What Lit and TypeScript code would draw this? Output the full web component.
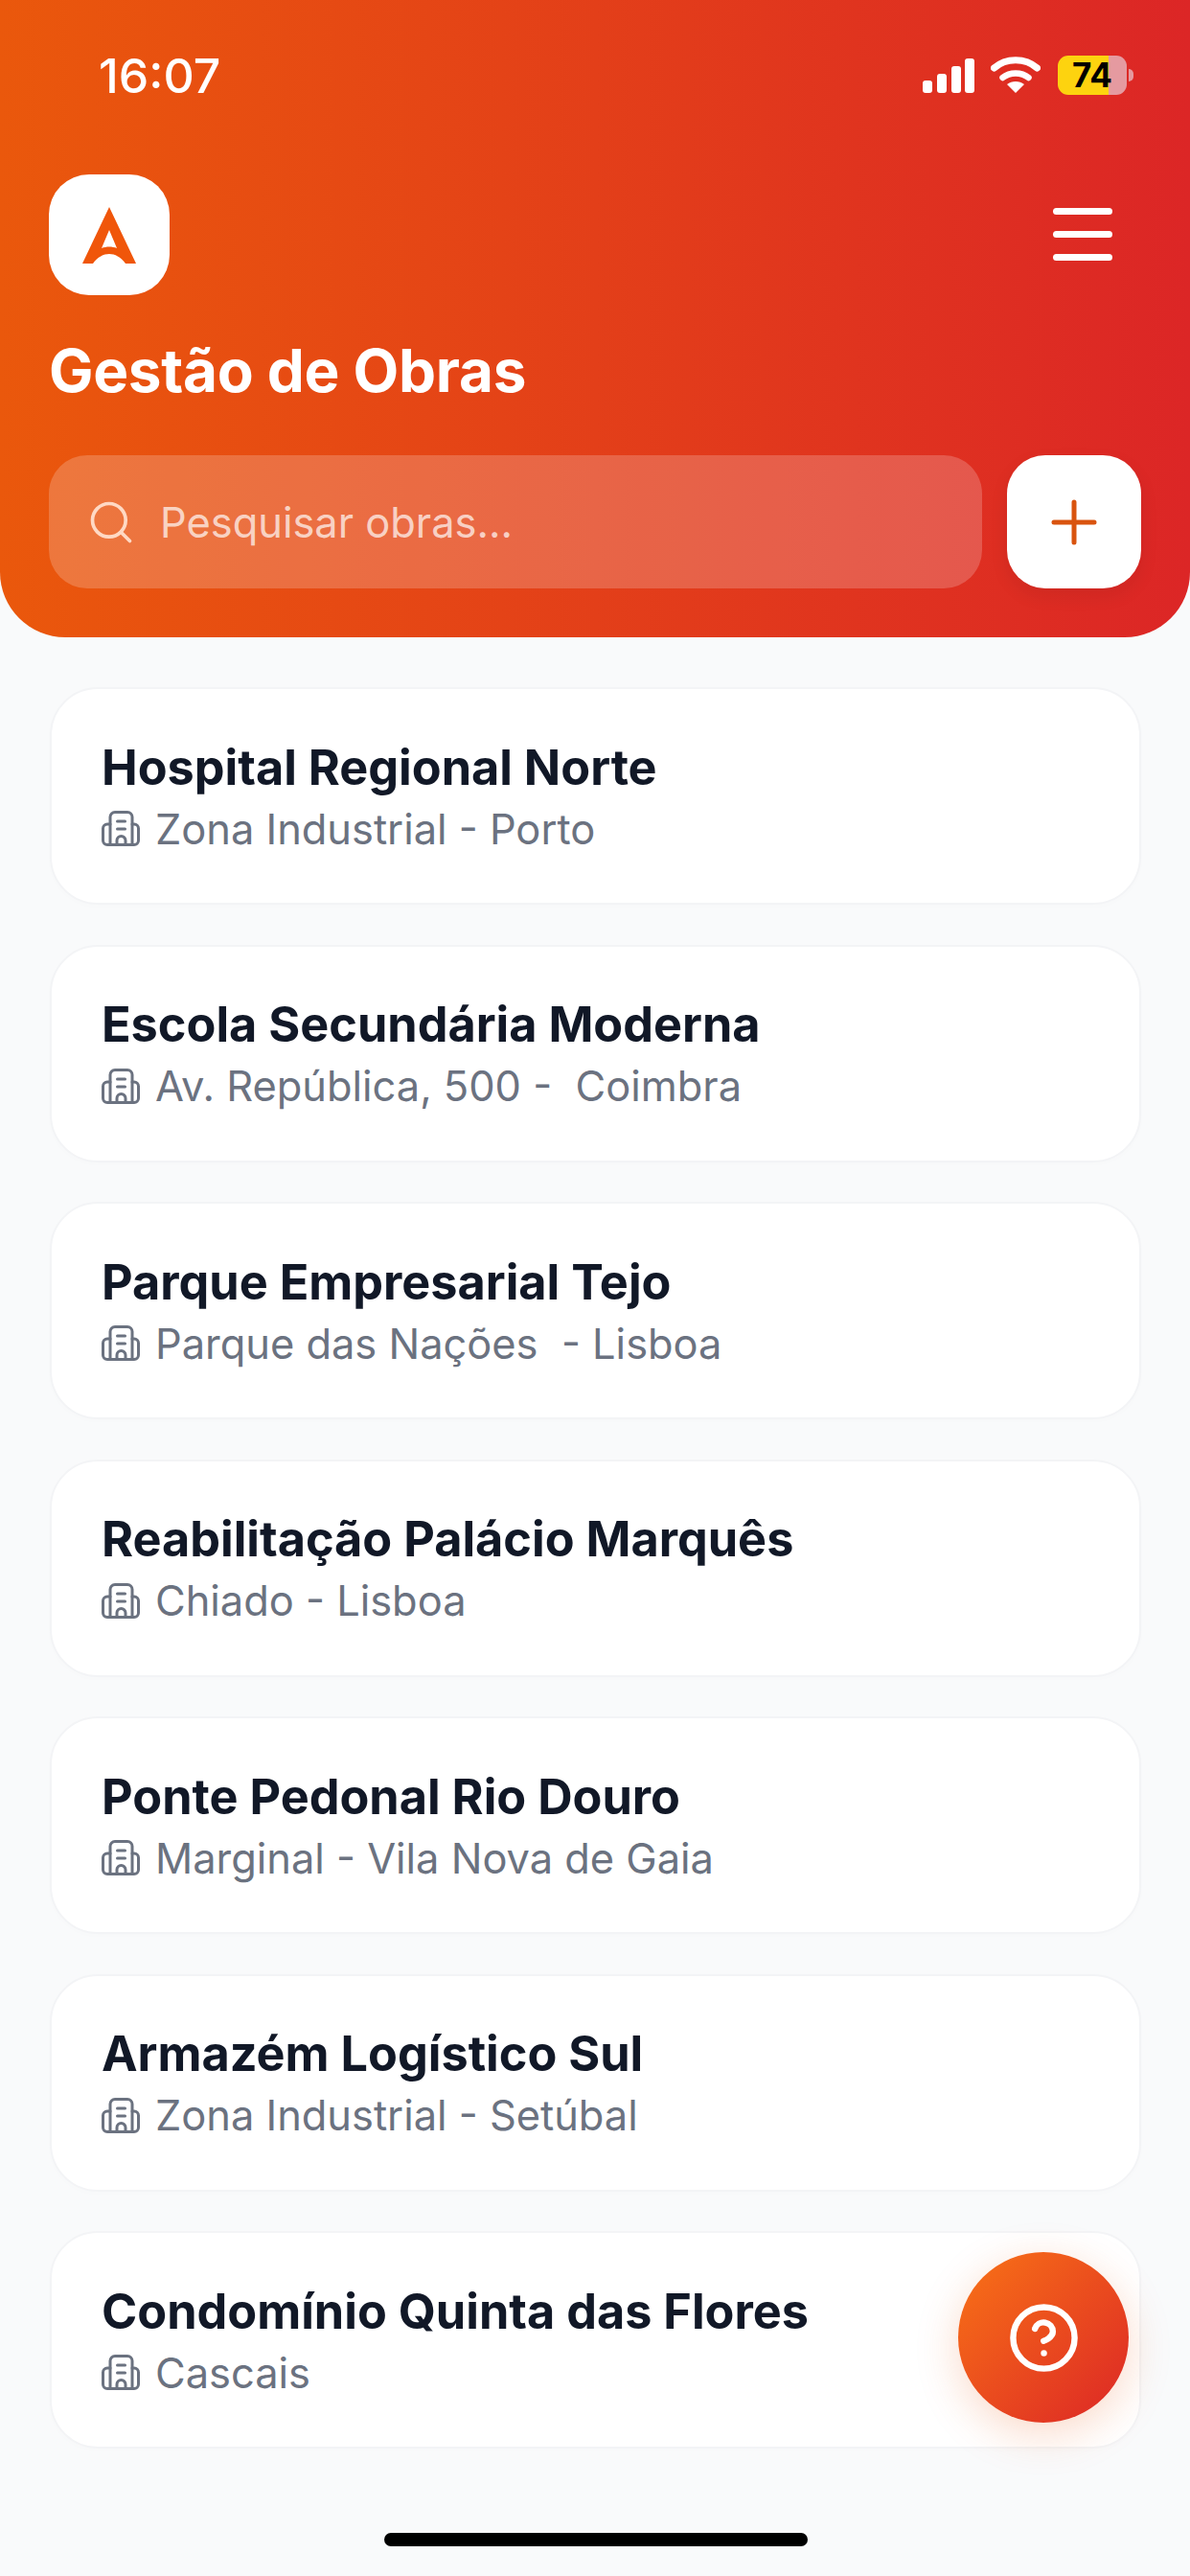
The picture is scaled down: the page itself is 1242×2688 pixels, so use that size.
import { LitElement, html, css, svg } from "lit";
import { customElement } from "lit/decorators.js";

const OBRAS = [
  ["Hospital Regional Norte", "Zona Industrial - Porto"],
  ["Escola Secundária Moderna", "Av. República, 500 -  Coimbra"],
  ["Parque Empresarial Tejo", "Parque das Nações  - Lisboa"],
  ["Reabilitação Palácio Marquês", "Chiado - Lisboa"],
  ["Ponte Pedonal Rio Douro", "Marginal - Vila Nova de Gaia"],
  ["Armazém Logístico Sul", "Zona Industrial - Setúbal"],
  ["Condomínio Quinta das Flores", "Cascais"],
];

const buildingIcon = html`<svg class="building" viewBox="0 0 40 37" fill="none" stroke="currentColor" stroke-width="3" stroke-linecap="round" stroke-linejoin="round">
  ${svg`<path d="M9 35.500V6.500a5 5 0 0 1 5-5h13a5 5 0 0 1 5 5v29"/>
  <path d="M9 14H6a4.500 4.500 0 0 0-4.500 4.500V31A4.500 4.500 0 0 0 6 35.500h28a4.500 4.500 0 0 0 4.500-4.500V18.500A4.500 4.500 0 0 0 34 14h-2"/>
  <path d="M16.500 11h8M16.500 19h8"/>
  <path d="M16 35.500V31a4.500 4.500 0 0 1 9 0v4.500"/>`}
</svg>`;

@customElement("app-root")
export class AppRoot extends LitElement {
  static styles = css`
    :host {
      display: block;
      font-family: Inter, "Liberation Sans", sans-serif;
    }
    .page {
      position: relative;
      width: 1242px;
      height: 2688px;
      overflow: hidden;
      background: #f9fafb;
      display: flex;
      flex-direction: column;
    }
    .header {
      height: 665px;
      box-sizing: border-box;
      flex: none;
      background: linear-gradient(90deg, #ea580c, #dc2626);
      border-radius: 0 0 68px 68px;
      display: flex;
      flex-direction: column;
      color: #fff;
    }
    .status {
      height: 158px;
      flex: none;
      box-sizing: border-box;
      padding: 55px 66px 0 103px;
      display: flex;
      justify-content: space-between;
      align-items: flex-start;
    }
    .time {
      font-size: 50px;
      line-height: 48px;
      font-weight: 500;
    }
    .sys {
      display: flex;
      align-items: flex-start;
      padding-top: 3px;
    }
    .signal { width: 54px; height: 37px; margin-top: 2px; }
    .wifi { width: 52px; height: 39px; margin-left: 17px; }
    .battery {
      margin-left: 18px;
      width: 72px;
      height: 41px;
      border-radius: 11px;
      background: linear-gradient(90deg, #fdd30f 0 73.500%, #e59aa0 73.500%);
      color: #000;
      font-size: 35px;
      font-weight: 700;
      line-height: 41px;
      text-align: center;
      position: relative;
    }
    .knob {
      position: absolute;
      left: 74px;
      top: 14px;
      width: 5px;
      height: 13px;
      border-radius: 0 6px 6px 0;
      background: #e59aa0;
    }
    .brand {
      flex: none;
      height: 126px;
      margin-top: 24px;
      padding: 0 81px 0 51px;
      display: flex;
      justify-content: space-between;
      align-items: center;
    }
    .logo {
      width: 126px;
      height: 126px;
      border-radius: 42px;
      background: #fff;
      display: flex;
      align-items: center;
      justify-content: center;
    }
    .logo svg { width: 56px; height: 59px; }
    .menu {
      width: 62px;
      display: flex;
      flex-direction: column;
      gap: 17px;
      margin-top: -2px;
    }
    .menu span {
      height: 7px;
      border-radius: 4px;
      background: #fff;
    }
    .title {
      margin: 0;
      padding: 43px 51px 0;
      font-size: 62px;
      line-height: 72px;
      font-weight: 700;
      letter-spacing: -0.3px;
    }
    .tools {
      margin-top: 52px;
      padding: 0 51px;
      display: flex;
      gap: 26px;
    }
    .search {
      flex: 1;
      height: 139px;
      border-radius: 40px;
      background: rgba(255, 255, 255, 0.2);
      display: flex;
      align-items: center;
      padding-left: 39px;
      gap: 25px;
      font-size: 43.400px;
      color: rgba(255, 255, 255, 0.7);
    }
    .search svg { width: 52px; height: 52px; color: #ffd9c4; }
    .add {
      width: 140px;
      height: 139px;
      border-radius: 40px;
      background: #fff;
      box-shadow: 0 8px 20px rgba(0, 0, 0, 0.07);
      display: flex;
      align-items: center;
      justify-content: center;
    }
    .add svg { width: 48px; height: 48px; color: #d9540f; }
    .list {
      padding: 52px 51px 0 52px;
      display: flex;
      flex-direction: column;
      gap: 41.500px;
    }
    .card {
      height: 227px;
      box-sizing: border-box;
      background: #fff;
      border: 2px solid #f3f4f6;
      border-radius: 50px;
      padding: 4px 0 0 52px;
      display: flex;
      flex-direction: column;
      justify-content: center;
      box-shadow: 0 2px 6px rgba(0, 0, 0, 0.01);
    }
    .name {
      font-size: 50.400px;
      line-height: 60px;
      font-weight: 700;
      color: #111827;
    }
    .place {
      margin-top: 4px;
      display: flex;
      align-items: center;
      gap: 16px;
      font-size: 43.400px;
      line-height: 60px;
      color: #6b7280;
      white-space: pre;
    }
    .building { width: 40px; height: 37px; flex: none; }
    .fab {
      position: absolute;
      left: 1000px;
      top: 2350px;
      width: 178px;
      height: 178px;
      border-radius: 50%;
      background: linear-gradient(135deg, #f97316, #dc2626);
      box-shadow: 0 12px 45px rgba(234, 88, 12, 0.22);
      display: flex;
      align-items: center;
      justify-content: center;
    }
    .fab svg { width: 77px; height: 77px; color: #fff; }
    .home {
      position: absolute;
      left: 401px;
      top: 2643px;
      width: 442px;
      height: 14px;
      border-radius: 7px;
      background: #000;
    }
  `;

  render() {
    return html`
      <div class="page">
        <header class="header">
          <div class="status">
            <span class="time">16:07</span>
            <div class="sys">
              <svg class="signal" viewBox="0 0 54 37" fill="#fff">
                <rect x="0" y="24" width="10" height="13" rx="3" />
                <rect x="15" y="17" width="10" height="20" rx="3" />
                <rect x="30" y="9" width="10" height="28" rx="3" />
                <rect x="44" y="1" width="10" height="36" rx="3" />
              </svg>
              <svg class="wifi" viewBox="0 0 52 39">
                <path d="M3.500 13C16 2 36 2 48.500 13" fill="none" stroke="#fff" stroke-width="7" stroke-linecap="round" />
                <path d="M12.500 23C20 17 32 17 39.500 23" fill="none" stroke="#fff" stroke-width="6.500" stroke-linecap="round" />
                <path d="M26 39L17 30C22 26 30 26 35 30Z" fill="#fff" />
              </svg>
              <div class="battery">74<i class="knob"></i></div>
            </div>
          </div>
          <div class="brand">
            <div class="logo">
              <svg viewBox="0 0 56 59" fill="#f0560a" fill-rule="evenodd">
                <path d="M28 0L56 59H45C40 52 34 49 28 49C22 49 16 52 11 59H0ZM28 24L20 43C25 41 31 41 36 43Z" />
              </svg>
            </div>
            <div class="menu"><span></span><span></span><span></span></div>
          </div>
          <h1 class="title">Gestão de Obras</h1>
          <div class="tools">
            <div class="search">
              <svg viewBox="0 0 24 24" fill="none" stroke="currentColor" stroke-width="1.700" stroke-linecap="round">
                <circle cx="11" cy="11" r="8" />
                <path d="M21 21l-4.300-4.300" />
              </svg>
              <span>Pesquisar obras...</span>
            </div>
            <div class="add">
              <svg viewBox="0 0 48 48" fill="none" stroke="currentColor" stroke-width="5" stroke-linecap="round">
                <path d="M24 3v42M3 24h42" />
              </svg>
            </div>
          </div>
        </header>
        <main class="list">
          ${OBRAS.map(
            ([name, place]) => html`
              <article class="card">
                <div class="name">${name}</div>
                <div class="place">${buildingIcon}<span>${place}</span></div>
              </article>
            `
          )}
        </main>
        <div class="fab">
          <svg viewBox="0 0 24 24" fill="none" stroke="currentColor" stroke-width="2" stroke-linecap="round" stroke-linejoin="round">
            <circle cx="12" cy="12" r="10" />
            <path d="M9.090 9a3 3 0 0 1 5.830 1c0 2-3 3-3 3" />
            <path d="M12 17h.010" />
          </svg>
        </div>
        <div class="home"></div>
      </div>
    `;
  }
}
